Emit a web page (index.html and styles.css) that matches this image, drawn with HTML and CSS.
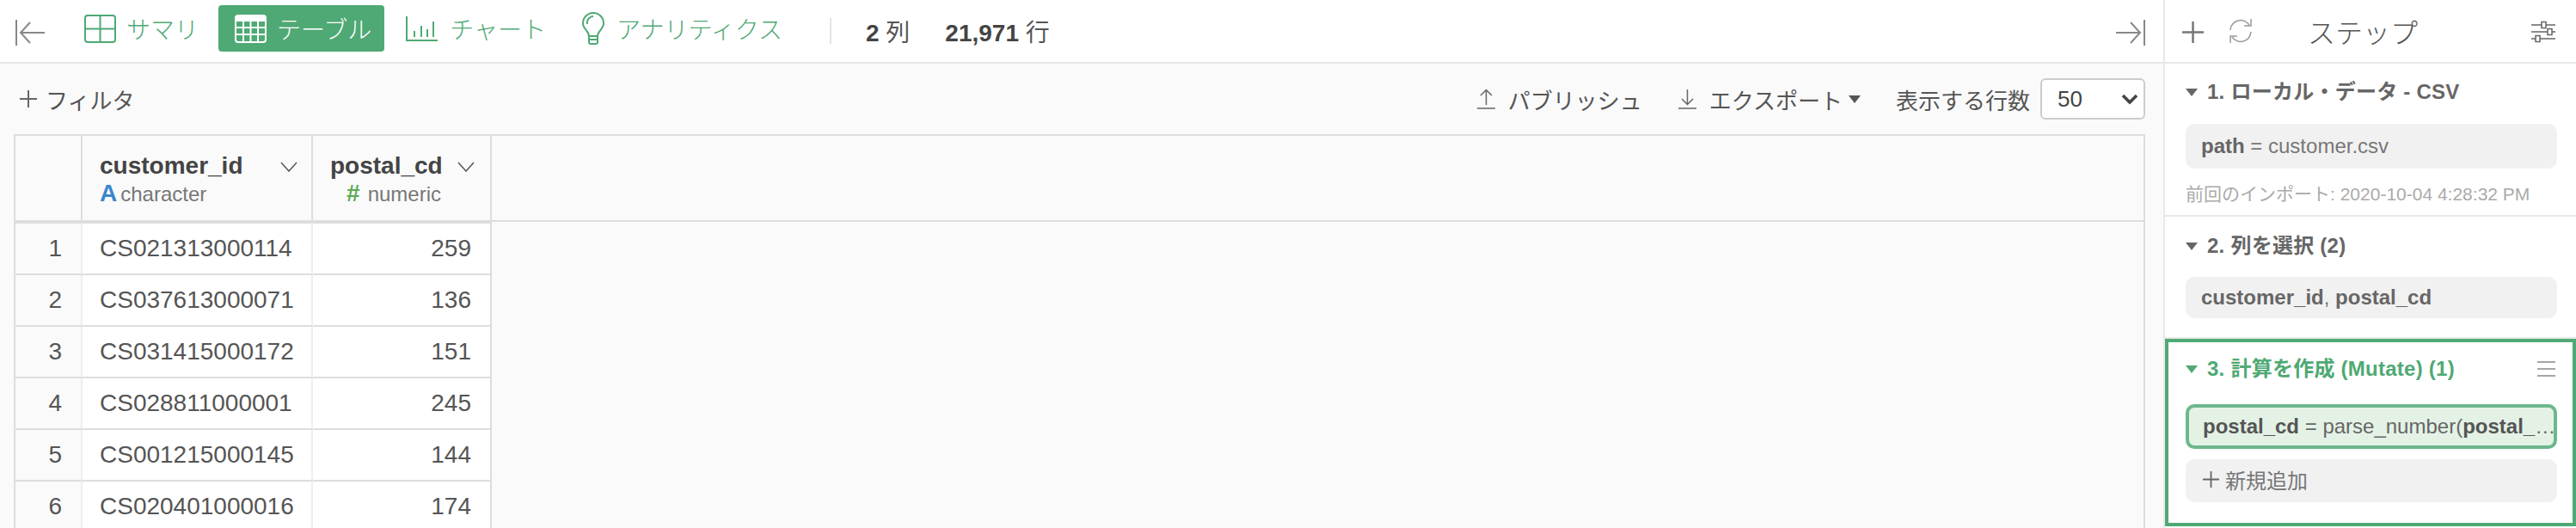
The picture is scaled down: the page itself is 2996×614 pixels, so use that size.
FILE: index.html
```html
<!DOCTYPE html>
<html lang="ja">
<head>
<meta charset="utf-8">
<title>テーブル</title>
<link rel="stylesheet" href="styles.css">
</head>
<body>
<div class="app">
  <main class="main">
    <header class="toolbar">
      <svg class="edge-icon edge-left" width="36" height="30" viewBox="0 0 36 30"><g fill="none" stroke="#888" stroke-width="2"><path d="M2 0V30"/><path d="M7 15H35"/><path d="M18 3L7 15L18 27"/></g></svg>
      <a class="tab tab-first">
        <svg class="tab-icon" width="37" height="33" viewBox="0 0 37 33"><g fill="none" stroke="#4fa974" stroke-width="2"><rect x="1" y="1" width="35" height="31" rx="3"/><path d="M18.5 1V32M1 16.5H36"/></g></svg>
        <span>サマリ</span>
      </a>
      <a class="tab tab-active">
        <svg class="tab-icon" width="37" height="33" viewBox="0 0 37 33"><g fill="none" stroke="#fff" stroke-width="2"><rect x="1" y="1" width="35" height="31" rx="3"/><path d="M1 5H36" stroke-width="6"/><path d="M1 15H36M1 23H36M10 6V32M18.5 6V32M27 6V32"/></g></svg>
        <span>テーブル</span>
      </a>
      <a class="tab">
        <svg class="tab-icon" width="37" height="29" viewBox="0 0 37 29"><g fill="none" stroke="#4fa974" stroke-width="2"><path d="M1 0V28H37"/><path d="M10 17V24M18 11V24M25 15V24M32 6V24"/></g></svg>
        <span>チャート</span>
      </a>
      <a class="tab tab-bulb">
        <svg class="tab-icon" width="26" height="38" viewBox="0 0 26 38"><g fill="none" stroke="#4fa974" stroke-width="2"><path d="M8 28C8 22 1 20 1 13A12 12 0 0 1 25 13C25 20 18 22 18 28Z"/><path d="M6 14C5 9 9 5 13 5"/><path d="M8 28H18V35Q18 37 16 37H10Q8 37 8 35ZM8 32H18"/></g></svg>
        <span>アナリティクス</span>
      </a>
      <span class="divider"></span>
      <span class="stat"><b>2</b> 列</span>
      <span class="stat stat-rows"><b>21,971</b> 行</span>
      <svg class="edge-icon edge-right" width="36" height="30" viewBox="0 0 36 30"><g fill="none" stroke="#888" stroke-width="2"><path d="M34 0V30"/><path d="M1 15H29"/><path d="M18 3L29 15L18 27"/></g></svg>
    </header>

    <div class="content">
      <div class="actions">
        <span class="filter"><svg width="20" height="20" viewBox="0 0 20 20"><path d="M10 0V20M0 10H20" stroke="#666" stroke-width="2"/></svg>フィルタ</span>
        <span class="action action-publish"><svg width="21" height="24" viewBox="0 0 21 24"><path d="M10.500 19V2M4 8L10.500 1.500L17 8M0 23H21" fill="none" stroke="#666" stroke-width="1.500"/></svg>パブリッシュ</span>
        <span class="action action-export"><svg width="21" height="24" viewBox="0 0 21 24"><path d="M10.500 1V18M4 12L10.500 18.500L17 12M0 23H21" fill="none" stroke="#666" stroke-width="1.500"/></svg>エクスポート<i class="caret caret-export"></i></span>
        <span class="rows-label">表示する行数</span>
        <div class="rows-select"><span>50</span><svg width="20" height="14" viewBox="0 0 20 14"><path d="M2 3L10 11L18 3" fill="none" stroke="#444" stroke-width="3.500"/></svg></div>
      </div>

      <div class="grid">
        <div class="head idx"></div>
        <div class="head">
          <div class="name-line"><span class="col-name">customer_id</span><svg class="chev" width="20" height="12" viewBox="0 0 20 12"><path d="M1 1L10 11L19 1" fill="none" stroke="#555" stroke-width="1.500"/></svg></div>
          <div class="type-line"><b class="type-a">A</b>character</div>
        </div>
        <div class="head head-num">
          <div class="name-line"><span class="col-name">postal_cd</span><svg class="chev" width="20" height="12" viewBox="0 0 20 12"><path d="M1 1L10 11L19 1" fill="none" stroke="#555" stroke-width="1.500"/></svg></div>
          <div class="type-line type-line-num"><b class="type-n">#</b>numeric</div>
        </div>
        <div class="filler-head"></div>

        <div class="idx cell first">1</div><div class="cell first">CS021313000114</div><div class="cell num first">259</div><div class="filler"></div>
        <div class="idx cell">2</div><div class="cell">CS037613000071</div><div class="cell num">136</div><div class="filler"></div>
        <div class="idx cell">3</div><div class="cell">CS031415000172</div><div class="cell num">151</div><div class="filler"></div>
        <div class="idx cell">4</div><div class="cell">CS028811000001</div><div class="cell num">245</div><div class="filler"></div>
        <div class="idx cell">5</div><div class="cell">CS001215000145</div><div class="cell num">144</div><div class="filler"></div>
        <div class="idx cell">6</div><div class="cell">CS020401000016</div><div class="cell num">174</div><div class="filler"></div>
      </div>
    </div>
  </main>

  <aside class="side">
    <header class="side-head">
      <svg class="side-plus" width="25" height="25" viewBox="0 0 25 25"><path d="M12.500 0V25M0 12.500H25" stroke="#777" stroke-width="2.500"/></svg>
      <svg class="side-refresh" width="28" height="28" viewBox="0 0 28 28"><g fill="none" stroke="#999" stroke-width="1.500"><path d="M2 13A12 12 0 0 1 24 7"/><path d="M26 15A12 12 0 0 1 4 21"/><path d="M26 0V8H18"/><path d="M2 28V20H10"/></g></svg>
      <span class="side-title">ステップ</span>
      <svg class="side-tune" width="28" height="26" viewBox="0 0 28 26"><g fill="none" stroke="#666" stroke-width="1.500"><path d="M0 5H12M17 5H28M0 13H19M24 13H28M0 21H5M10 21H28"/><rect x="12" y="1.500" width="5" height="7" fill="#fff"/><rect x="19" y="9.500" width="5" height="7" fill="#fff"/><rect x="5" y="17.500" width="5" height="7" fill="#fff"/></g></svg>
    </header>

    <section class="step step-one">
      <h3 class="step-title"><i class="caret"></i>1. ローカル・データ - CSV</h3>
      <div class="pill"><b>path</b>&nbsp;= customer.csv</div>
      <p class="note">前回のインポート: 2020-10-04 4:28:32 PM</p>
    </section>

    <section class="step step-two">
      <h3 class="step-title"><i class="caret"></i>2. 列を選択 (2)</h3>
      <div class="pill"><b>customer_id</b>,&nbsp;<b>postal_cd</b></div>
    </section>

    <section class="step step-active">
      <h3 class="step-title"><i class="caret"></i>3. 計算を作成 (Mutate) (1)<svg class="menu" width="21" height="18" viewBox="0 0 21 18"><path d="M0 1H21M0 9H21M0 17H21" stroke="#888" stroke-width="1.500"/></svg></h3>
      <div class="pill pill-selected"><span><b>postal_cd</b> = parse_number(<b>postal_</b>…</span></div>
      <div class="pill pill-add"><svg width="19" height="19" viewBox="0 0 19 19"><path d="M9.500 0V19M0 9.500H19" stroke="#666" stroke-width="1.800"/></svg>新規追加</div>
    </section>
  </aside>
</div>
</body>
</html>
```

FILE: styles.css
```css
* { box-sizing: border-box; }

html, body {
  margin: 0;
  height: 100%;
  overflow: hidden;
  background: #fff;
}

body {
  font-family: "Liberation Sans", "Noto Sans CJK JP", sans-serif;
  font-size: 28px;
  color: #555;
}

.app {
  display: flex;
  height: 614px;
}

.main {
  flex: 0 0 2516px;
  display: flex;
  flex-direction: column;
  min-width: 0;
}

.toolbar {
  flex: 0 0 74px;
  display: flex;
  align-items: center;
  border-bottom: 2px solid #e8e8e8;
  padding-right: 20px;
}

.edge-icon { flex: none; margin-top: 4px; }
.edge-left { margin-left: 17px; margin-right: 26px; }
.edge-right { margin-left: auto; }

.tab {
  display: flex;
  align-items: center;
  gap: 14px;
  height: 54px;
  margin-top: -6px;
  padding: 0 13px 0 19px;
  margin-right: 6px;
  border-radius: 4px;
  color: #4fa974;
  font-weight: 300;
}

.tab-first { gap: 12px; padding-right: 17px; }
.tab-active { gap: 12px; padding-right: 15px; background: #4fa974; color: #fff; }
.tab-bulb { padding-left: 23px; }
.tab-icon { flex: none; }

.divider {
  width: 2px;
  height: 30px;
  margin: 0 40px 0 36px;
  background: #e4e4e4;
}

.stat { color: #555; }
.stat b { color: #444; }
.stat-rows { margin-left: 41px; }

.content {
  flex: 1;
  min-height: 0;
  background: #fafafa;
  display: flex;
  flex-direction: column;
}

.actions {
  flex: 0 0 82px;
  display: flex;
  align-items: center;
  padding: 0 21px 0 23px;
  font-size: 26px;
  color: #555;
}

.filter, .action {
  display: flex;
  align-items: center;
  gap: 10px;
}

.action { gap: 15px; }
.action-publish { margin-left: auto; }
.action-export { margin-left: 42px; }

.caret {
  display: inline-block;
  width: 0;
  height: 0;
  border-left: 7px solid transparent;
  border-right: 7px solid transparent;
  border-top: 9px solid #555;
}

.caret-export { margin-left: -8px; }

.rows-label { margin-left: 41px; }

.rows-select {
  flex: 0 0 122px;
  height: 48px;
  margin-left: 12px;
  padding: 0 6px 0 18px;
  display: flex;
  align-items: center;
  justify-content: space-between;
  background: #fff;
  border: 2px solid #ccc;
  border-radius: 6px;
  color: #444;
}

.grid {
  margin: 0 21px 0 16px;
  flex: 1;
  min-height: 0;
  overflow: hidden;
  display: grid;
  grid-template-columns: 78px 268px 208px 1fr;
  grid-auto-rows: 60px;
  grid-template-rows: 100px 62px;
  border: 2px solid #ddd;
  border-bottom: 0;
}

.head {
  border-right: 2px solid #ddd;
  border-bottom: 2px solid #ddd;
  padding: 18px 16px 0 20px;
  background: #fafafa;
}

.head-num { padding-left: 20px; padding-right: 18px; }

.head.idx { padding: 0; }

.filler-head { border-bottom: 2px solid #ddd; }

.name-line {
  display: flex;
  align-items: center;
  justify-content: space-between;
  height: 34px;
}

.col-name {
  font-weight: 700;
  color: #444;
}

.chev { flex: none; margin-top: 2px; }

.type-line {
  display: flex;
  align-items: baseline;
  margin-top: 0;
  font-size: 24px;
  line-height: 30px;
  color: #777;
}

.type-line-num {
  justify-content: flex-end;
  padding-right: 39px;
}

.type-a { color: #3a86cc; font-size: 28px; margin-right: 4px; }
.type-n { color: #5cab52; font-size: 28px; margin-right: 9px; }

.cell {
  display: flex;
  align-items: center;
  padding: 0 0 0 20px;
  background: #fff;
  border-right: 2px solid #eee;
  border-bottom: 2px solid #ddd;
  font-size: 28px;
  color: #555;
}

.cell.first { border-top: 2px solid #ddd; }

.cell.idx {
  background: #fafafa;
  justify-content: flex-end;
  padding: 0 22px 0 0;
}

.cell.num {
  justify-content: flex-end;
  padding: 0 22px 0 0;
  border-right-color: #ddd;
}

.filler { background: #fafafa; }

.side {
  flex: 0 0 480px;
  border-left: 2px solid #e8e8e8;
  display: flex;
  flex-direction: column;
  min-width: 0;
}

.side-head {
  flex: 0 0 74px;
  display: flex;
  align-items: center;
  border-bottom: 2px solid #e8e8e8;
  padding: 0 24px 0 20px;
}

.side-plus { flex: none; margin-top: 2px; }
.side-refresh { flex: none; margin: 0 0 0 29px; }

.side-title {
  font-size: 32px;
  font-weight: 300;
  margin-left: 64px;
  color: #555;
}

.side-tune { flex: none; margin-left: auto; margin-top: 2px; }

.step {
  padding: 0 22px 0 24px;
  border-bottom: 2px solid #e8e8e8;
}

.step-title {
  margin: 0;
  display: flex;
  align-items: center;
  font-size: 24px;
  line-height: 30px;
  font-weight: 700;
  letter-spacing: 0.25px;
  color: #666;
}

.step-title .caret { margin-right: 11px; border-top-color: #666; }

.step-one { height: 178px; padding-top: 18px; }
.step-one .step-title { margin-bottom: 22px; }
.step-two { height: 142px; padding-top: 19px; }
.step-two .step-title { margin-bottom: 21px; }

.pill {
  height: 50px;
  display: flex;
  align-items: center;
  padding: 0 18px;
  background: #f1f1f1;
  border-radius: 10px;
  font-size: 24px;
  color: #777;
  white-space: nowrap;
}

.pill b { color: #666; }

.step-one .pill { height: 52px; }
.step-two .pill { height: 48px; }

.note {
  margin: 16px 0 0;
  font-size: 21px;
  line-height: 28px;
  color: #aaa;
}

.step-active {
  height: 218px;
  margin-left: 0;
  padding: 16px 18px 0 20px;
  border: 4px solid #4fa974;
}

.step-active .step-title { color: #4fa974; margin-bottom: 26px; }
.step-active .step-title .caret { border-top-color: #4fa974; }

.menu { flex: none; margin-left: auto; margin-right: 2px; }

.pill-selected {
  height: 52px;
  padding: 0 4px 0 16px;
  background: #e4f2e6;
  border: 4px solid #6cb88c;
  color: #666;
}

.pill-selected b { color: #555; }

.pill-add {
  margin-top: 12px;
  gap: 7px;
  padding: 0 18px 4px 20px;
}
```
